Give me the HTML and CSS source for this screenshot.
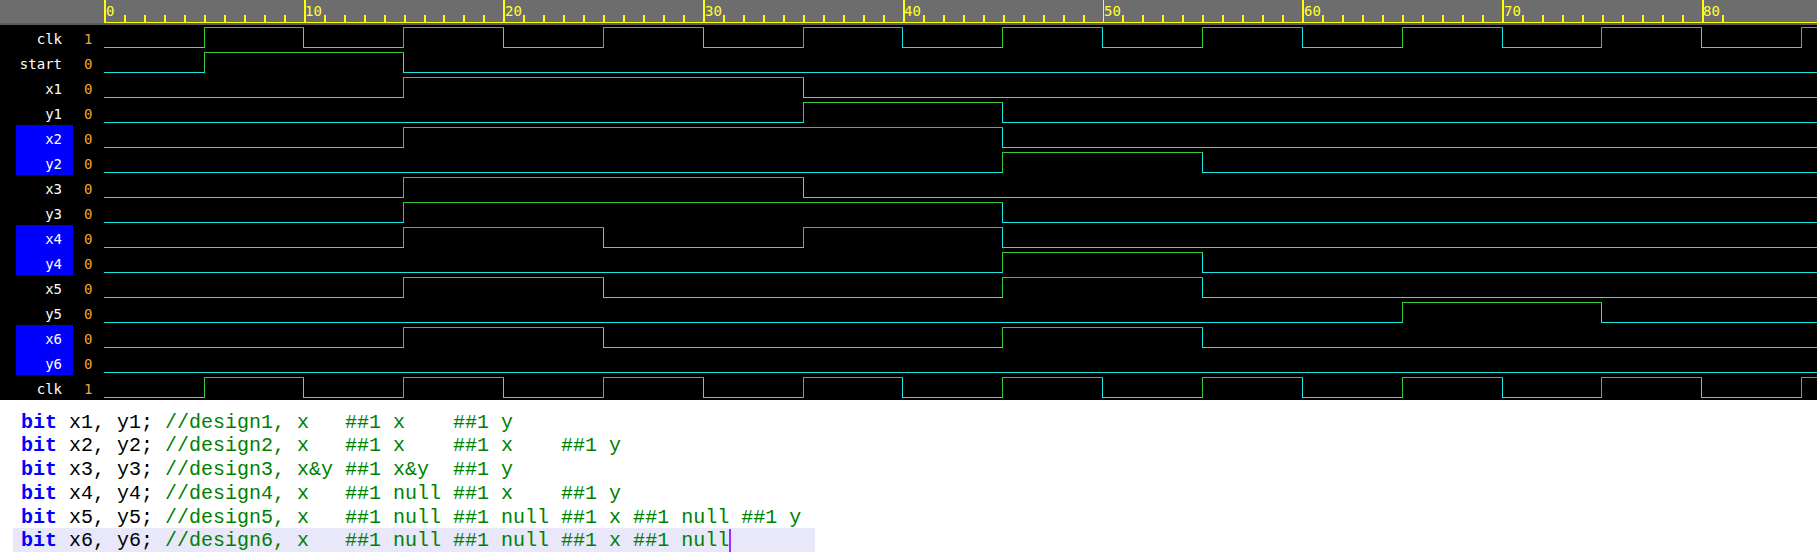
FILE: index.html
```html
<!DOCTYPE html>
<html>
<head>
<meta charset="utf-8">
<link rel="stylesheet" href="styles.css">
</head>
<body>
<div class="wave">
  <svg class="ruler" width="1817" height="25" xmlns="http://www.w3.org/2000/svg">
    <rect x="0" y="0" width="1817" height="23" fill="#6d6d6d"/>
    <rect x="0" y="23" width="1817" height="2" fill="#5c5c5c"/>
    <rect x="104" y="22" width="1713" height="1" fill="#ffff00"/>
    <g transform="translate(104,0) scale(0.9985,1)" shape-rendering="crispEdges" stroke="#ffff00" stroke-width="2" fill="none">
      <path d="M1 15v7m20-7v7m20-7v7m20-7v7m20-7v7m20-7v7m20-7v7m20-7v7m20-7v7m20-7v7m20-7v7m20-7v7m20-7v7m20-7v7m20-7v7m20-7v7m20-7v7m20-7v7m20-7v7m20-7v7m20-7v7m20-7v7m20-7v7m20-7v7m20-7v7m20-7v7m20-7v7m20-7v7m20-7v7m20-7v7m20-7v7m20-7v7m20-7v7m20-7v7m20-7v7m20-7v7m20-7v7m20-7v7m20-7v7m20-7v7m20-7v7m20-7v7m20-7v7m20-7v7m20-7v7m20-7v7m20-7v7m20-7v7m20-7v7m20-7v7m20-7v7m20-7v7m20-7v7m20-7v7m20-7v7m20-7v7m20-7v7m20-7v7m20-7v7m20-7v7m20-7v7m20-7v7m20-7v7m20-7v7m20-7v7m20-7v7m20-7v7m20-7v7m20-7v7m20-7v7m20-7v7m20-7v7m20-7v7m20-7v7m20-7v7m20-7v7m20-7v7m20-7v7m20-7v7m20-7v7m20-7v7m20-7v7"/>
      <path d="M1 0v22M201 0v22M401 0v22M601 0v22M801 0v22M1001 0v22M1201 0v22M1401 0v22M1601 0v22"/>
    </g>
    <g class="rlabel" fill="#ffff30">
      <text x="106" y="16">0</text>
      <text x="305" y="16">10</text>
      <text x="505" y="16">20</text>
      <text x="705" y="16">30</text>
      <text x="904" y="16">40</text>
      <text x="1104" y="16">50</text>
      <text x="1304" y="16">60</text>
      <text x="1504" y="16">70</text>
      <text x="1703" y="16">80</text>
    </g>
  </svg>

  <div class="row"><div class="name">clk</div><div class="val">1</div>
    <svg class="sig" width="1717" height="25"><path class="lo" d="M4 22.5H104.5M203.5 2.5V22.5H303.5M403.5 2.5V22.5H503.5M603.5 2.5V22.5H703.5M802.5 2.5V22.5H902.5M1002.5 2.5V22.5H1102.5M1202.5 2.5V22.5H1302.5M1402.5 2.5V22.5H1501.5M1601.5 2.5V22.5H1701.5"/><path class="hi" d="M104.5 22.5V2.5H203.5M303.5 22.5V2.5H403.5M503.5 22.5V2.5H603.5M703.5 22.5V2.5H802.5M902.5 22.5V2.5H1002.5M1102.5 22.5V2.5H1202.5M1302.5 22.5V2.5H1402.5M1501.5 22.5V2.5H1601.5M1701.5 22.5V2.5H1717"/></svg></div>

  <div class="row"><div class="name">start</div><div class="val">0</div>
    <svg class="sig" width="1717" height="25"><path class="hi" d="M104.5 22.5V2.5H303.5"/><path class="lo" d="M4 22.5H104.5M303.5 2.5V22.5H1717"/></svg></div>

  <div class="row"><div class="name">x1</div><div class="val">0</div>
    <svg class="sig" width="1717" height="25"><path class="hi" d="M303.5 22.5V2.5H703.5"/><path class="lo" d="M4 22.5H303.5M703.5 2.5V22.5H1717"/></svg></div>

  <div class="row"><div class="name">y1</div><div class="val">0</div>
    <svg class="sig" width="1717" height="25"><path class="hi" d="M703.5 22.5V2.5H902.5"/><path class="lo" d="M4 22.5H703.5M902.5 2.5V22.5H1717"/></svg></div>

  <div class="row"><div class="name sel">x2</div><div class="val">0</div>
    <svg class="sig" width="1717" height="25"><path class="hi" d="M303.5 22.5V2.5H902.5"/><path class="lo" d="M4 22.5H303.5M902.5 2.5V22.5H1717"/></svg></div>

  <div class="row"><div class="name sel">y2</div><div class="val">0</div>
    <svg class="sig" width="1717" height="25"><path class="hi" d="M902.5 22.5V2.5H1102.5"/><path class="lo" d="M4 22.5H902.5M1102.5 2.5V22.5H1717"/></svg></div>

  <div class="row"><div class="name">x3</div><div class="val">0</div>
    <svg class="sig" width="1717" height="25"><path class="hi" d="M303.5 22.5V2.5H703.5"/><path class="lo" d="M4 22.5H303.5M703.5 2.5V22.5H1717"/></svg></div>

  <div class="row"><div class="name">y3</div><div class="val">0</div>
    <svg class="sig" width="1717" height="25"><path class="hi" d="M303.5 22.5V2.5H902.5"/><path class="lo" d="M4 22.5H303.5M902.5 2.5V22.5H1717"/></svg></div>

  <div class="row"><div class="name sel">x4</div><div class="val">0</div>
    <svg class="sig" width="1717" height="25"><path class="hi" d="M303.5 22.5V2.5H503.5M703.5 22.5V2.5H902.5"/><path class="lo" d="M4 22.5H303.5M503.5 2.5V22.5H703.5M902.5 2.5V22.5H1717"/></svg></div>

  <div class="row"><div class="name sel">y4</div><div class="val">0</div>
    <svg class="sig" width="1717" height="25"><path class="hi" d="M902.5 22.5V2.5H1102.5"/><path class="lo" d="M4 22.5H902.5M1102.5 2.5V22.5H1717"/></svg></div>

  <div class="row"><div class="name">x5</div><div class="val">0</div>
    <svg class="sig" width="1717" height="25"><path class="hi" d="M303.5 22.5V2.5H503.5M902.5 22.5V2.5H1102.5"/><path class="lo" d="M4 22.5H303.5M503.5 2.5V22.5H902.5M1102.5 2.5V22.5H1717"/></svg></div>

  <div class="row"><div class="name">y5</div><div class="val">0</div>
    <svg class="sig" width="1717" height="25"><path class="hi" d="M1302.5 22.5V2.5H1501.5"/><path class="lo" d="M4 22.5H1302.5M1501.5 2.5V22.5H1717"/></svg></div>

  <div class="row"><div class="name sel">x6</div><div class="val">0</div>
    <svg class="sig" width="1717" height="25"><path class="hi" d="M303.5 22.5V2.5H503.5M902.5 22.5V2.5H1102.5"/><path class="lo" d="M4 22.5H303.5M503.5 2.5V22.5H902.5M1102.5 2.5V22.5H1717"/></svg></div>

  <div class="row"><div class="name sel">y6</div><div class="val">0</div>
    <svg class="sig" width="1717" height="25"><path class="lo" d="M4 22.5H1717"/></svg></div>

  <div class="row"><div class="name">clk</div><div class="val">1</div>
    <svg class="sig" width="1717" height="25"><path class="lo" d="M4 22.5H104.5M203.5 2.5V22.5H303.5M403.5 2.5V22.5H503.5M603.5 2.5V22.5H703.5M802.5 2.5V22.5H902.5M1002.5 2.5V22.5H1102.5M1202.5 2.5V22.5H1302.5M1402.5 2.5V22.5H1501.5M1601.5 2.5V22.5H1701.5"/><path class="hi" d="M104.5 22.5V2.5H203.5M303.5 22.5V2.5H403.5M503.5 22.5V2.5H603.5M703.5 22.5V2.5H802.5M902.5 22.5V2.5H1002.5M1102.5 22.5V2.5H1202.5M1302.5 22.5V2.5H1402.5M1501.5 22.5V2.5H1601.5M1701.5 22.5V2.5H1717"/></svg></div>
</div>

<div class="code">
  <div class="line"><span class="kw">bit</span> x1, y1; <span class="cm">//design1, x   ##1 x    ##1 y</span></div>
  <div class="line"><span class="kw">bit</span> x2, y2; <span class="cm">//design2, x   ##1 x    ##1 x    ##1 y</span></div>
  <div class="line"><span class="kw">bit</span> x3, y3; <span class="cm">//design3, x&amp;y ##1 x&amp;y  ##1 y</span></div>
  <div class="line"><span class="kw">bit</span> x4, y4; <span class="cm">//design4, x   ##1 null ##1 x    ##1 y</span></div>
  <div class="line"><span class="kw">bit</span> x5, y5; <span class="cm">//design5, x   ##1 null ##1 null ##1 x ##1 null ##1 y</span></div>
  <div class="line current"><span class="kw">bit</span> x6, y6; <span class="cm caret">//design6, x   ##1 null ##1 null ##1 x ##1 null</span></div>
</div>
</body>
</html>
```

FILE: styles.css
```css
html, body {
  margin: 0;
  padding: 0;
  background: #ffffff;
}

body {
  width: 1817px;
  height: 560px;
  overflow: hidden;
}

.wave {
  background: #000000;
  height: 400px;
  display: flex;
  flex-direction: column;
}

.ruler {
  display: block;
  flex: none;
}

.rlabel {
  font-family: "DejaVu Sans Mono", monospace;
  font-size: 14px;
}

.row {
  display: flex;
  height: 25px;
  flex: none;
  font-family: "DejaVu Sans Mono", monospace;
  font-size: 14px;
}

.name {
  box-sizing: border-box;
  margin-left: 16px;
  width: 57px;
  height: 25px;
  padding: 4px 11px 0 0;
  line-height: 21px;
  text-align: right;
  color: #ffffff;
  white-space: pre;
}

.name.sel {
  background: #0000ff;
}

.val {
  box-sizing: border-box;
  width: 27px;
  height: 25px;
  padding: 4px 0 0 11px;
  line-height: 21px;
  color: #f3a530;
}

.sig {
  display: block;
  flex: none;
}

.sig path {
  fill: none;
  stroke-width: 1;
  shape-rendering: crispEdges;
}

.sig .hi {
  stroke: #38c838;
}

.sig .lo {
  stroke: #19e6e6;
}

.code {
  height: 160px;
  box-sizing: border-box;
  padding-top: 9.5px;
  background: #ffffff;
  font-family: "Liberation Mono", "Courier New", monospace;
  font-size: 20px;
  color: #000000;
}

.line {
  box-sizing: border-box;
  height: 23.8px;
  margin-left: 13px;
  width: 802px;
  padding: 2px 0 0 8px;
  line-height: 21.8px;
  white-space: pre;
}

.line.current {
  background: #e8e8fa;
}

.kw {
  color: #0000ff;
  font-weight: bold;
}

.cm {
  color: #008000;
}

.caret {
  border-right: 2px solid #9b30ff;
}
```
